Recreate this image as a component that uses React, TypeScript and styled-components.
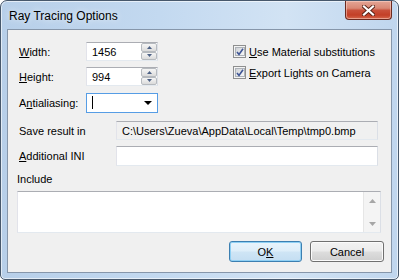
import React from "react";
import styled, { createGlobalStyle } from "styled-components";

const Global = createGlobalStyle`
  html, body { margin: 0; padding: 0; background: #ffffff; }
  body { width: 399px; height: 280px; overflow: hidden; }
  #root { width: 399px; height: 280px; }
`;

const Window = styled.div`
  box-sizing: border-box;
  width: 399px;
  height: 280px;
  border: 1px solid #47586c;
  border-radius: 7px 7px 5px 5px;
  background: linear-gradient(90deg, #b7cfe9 0%, #c3d9f0 40%, #d2e3f4 72%, #c0d6ee 100%);
  box-shadow: inset 0 0 0 1px rgba(255, 255, 255, 0.6);
  display: flex;
  flex-direction: column;
  font-family: "Liberation Sans", Arial, sans-serif;
  font-size: 11px;
  color: #000;
  overflow: hidden;
`;

const TitleBar = styled.div`
  height: 28px;
  display: flex;
  align-items: flex-start;
  padding: 0 6px 0 8px;
  flex: none;
`;

const Title = styled.div`
  font-family: "Liberation Sans", Arial, sans-serif;
  font-size: 12px;
  line-height: 16px;
  margin-top: 7px;
  color: #000;
  text-shadow: 0 0 6px rgba(255, 255, 255, 0.9);
`;

const CloseButton = styled.div`
  margin-left: auto;
  width: 47px;
  height: 19px;
  box-sizing: border-box;
  border: 1px solid #6b2a20;
  border-top: none;
  border-radius: 0 0 4px 4px;
  background: linear-gradient(180deg, #e4a595 0%, #d98875 40%, #c9503a 52%, #c33f27 78%, #d5674c 100%);
  box-shadow: inset 0 0 0 1px rgba(255, 220, 210, 0.5);
  display: flex;
  align-items: center;
  justify-content: center;
`;

const Client = styled.div`
  flex: 1;
  margin: 0 6px 6px 6px;
  box-sizing: border-box;
  border: 1px solid #8696aa;
  background: #f0f0f0;
  padding: 12px 7px 9px 9px;
  display: flex;
  flex-direction: column;
`;

const TopSection = styled.div`
  display: flex;
  align-items: flex-start;
`;

const LeftGrid = styled.div`
  display: grid;
  grid-template-columns: 69px 72px;
  grid-template-rows: 19px 19px 20px;
  row-gap: 6px;
  align-items: center;
  & > :nth-child(5), & > :nth-child(6) { margin-top: 1px; }
`;

const Label = styled.div<{ $indent?: number }>`
  padding-left: ${(p) => p.$indent ?? 2}px;
  line-height: 14px;
  white-space: nowrap;
`;

const Edit = styled.div<{ $readonly?: boolean; $focused?: boolean; $h?: number }>`
  box-sizing: border-box;
  height: ${(p) => p.$h ?? (p.$focused ? 20 : 19)}px;
  border: 1px solid;
  border-color: ${(p) =>
    p.$focused ? "#569de5" : "#abadb3 #dbdfe6 #e3e9ef #e2e3ea"};
  background: ${(p) => (p.$readonly ? "#f0f0f0" : "#ffffff")};
  display: flex;
  align-items: center;
  padding-left: 5px;
  white-space: nowrap;
  overflow: hidden;
`;

const EditText = styled.span`
  line-height: 14px;
`;

const SpinColumn = styled.div`
  margin-left: auto;
  width: 16px;
  align-self: stretch;
  display: flex;
  flex-direction: column;
`;

const SpinButton = styled.div`
  flex: 1;
  box-sizing: border-box;
  border: 1px solid #b6babf;
  border-radius: 2px;
  background: linear-gradient(180deg, #f5f5f5 0%, #e9e9e9 50%, #dadada 100%);
  display: flex;
  align-items: center;
  justify-content: center;
`;

const Caret = styled.span`
  width: 1px;
  height: 13px;
  background: #000;
`;

const DropArrow = styled.div`
  margin-left: auto;
  margin-right: 5px;
  width: 0;
  height: 0;
  border-left: 4px solid transparent;
  border-right: 4px solid transparent;
  border-top: 4px solid #000;
`;

const Checks = styled.div`
  margin-left: 75px;
  margin-top: 1px;
  display: flex;
  flex-direction: column;
  gap: 4px;
`;

const CheckRow = styled.div`
  height: 17px;
  display: flex;
  align-items: center;
  gap: 3px;
  white-space: nowrap;
`;

const CheckBox = styled.div`
  width: 13px;
  height: 13px;
  box-sizing: border-box;
  border: 1px solid #8e8f8f;
  background: #f4f4f4;
  padding: 1px;
  display: flex;
`;

const CheckInner = styled.div`
  flex: 1;
  border: 1px solid #aeb3b9;
  background: linear-gradient(135deg, #cfd2d6 0%, #e8eaec 60%, #f6f6f6 100%);
  display: flex;
  align-items: center;
  justify-content: center;
`;

const FieldRow = styled.div<{ $top: number }>`
  display: grid;
  grid-template-columns: 99px 262px;
  align-items: center;
  margin-top: ${(p) => p.$top}px;
`;

const IncludeLabel = styled.div`
  margin-top: 6px;
  line-height: 14px;
`;

const TextArea = styled.div`
  margin-top: 5px;
  margin-right: 3px;
  height: 42px;
  box-sizing: border-box;
  border: 1px solid;
  border-color: #abadb3 #dbdfe6 #e3e9ef #e2e3ea;
  background: #ffffff;
  display: flex;
  justify-content: flex-end;
`;

const ScrollBar = styled.div`
  width: 17px;
  box-sizing: border-box;
  border-left: 1px solid #e6e6e6;
  background: #f4f4f4;
  display: flex;
  flex-direction: column;
  justify-content: space-between;
  align-items: center;
  padding: 7px 0 6px;
`;

const ButtonRow = styled.div`
  margin-top: 8px;
  display: flex;
  justify-content: flex-end;
  gap: 8px;
`;

const Button = styled.div<{ $default?: boolean; $w: number }>`
  width: ${(p) => p.$w}px;
  height: 21px;
  box-sizing: border-box;
  border: 1px solid ${(p) => (p.$default ? "#3c7fb1" : "#707070")};
  border-radius: 3px;
  background: ${(p) =>
    p.$default
      ? "linear-gradient(180deg, #e9f4fc 0%, #deeef9 48%, #cfe5f5 52%, #c4def2 100%)"
      : "linear-gradient(180deg, #f2f2f2 0%, #ebebeb 48%, #dddddd 52%, #cfcfcf 100%)"};
  box-shadow: ${(p) =>
    p.$default ? "inset 0 0 0 1px #8fd0f4" : "inset 0 0 0 1px #fbfbfb"};
  display: flex;
  align-items: center;
  justify-content: center;
  line-height: 14px;
`;

const Key = styled.u`
  text-decoration-thickness: 1px;
  text-underline-offset: 1px;
`;

const UpTri = ({ color }: { color: string }) => (
  <svg width="7" height="4" viewBox="0 0 7 4">
    <path d="M0 4 L3.5 0 L7 4 Z" fill={color} />
  </svg>
);
const DownTri = ({ color }: { color: string }) => (
  <svg width="7" height="4" viewBox="0 0 7 4">
    <path d="M0 0 L3.5 4 L7 0 Z" fill={color} />
  </svg>
);

const Spin = () => (
  <SpinColumn>
    <SpinButton>
      <svg width="5" height="3" viewBox="0 0 5 3">
        <path d="M0 3 L2.5 0 L5 3 Z" fill="#4d6185" />
      </svg>
    </SpinButton>
    <SpinButton>
      <svg width="5" height="3" viewBox="0 0 5 3">
        <path d="M0 0 L2.5 3 L5 0 Z" fill="#4d6185" />
      </svg>
    </SpinButton>
  </SpinColumn>
);

const Check = () => (
  <CheckBox>
    <CheckInner>
      <svg width="8" height="8" viewBox="0 0 8 8">
        <path d="M1 4 L3 6.5 L7 0.8" stroke="#3f5595" strokeWidth="1.6" fill="none" />
      </svg>
    </CheckInner>
  </CheckBox>
);

export default function App() {
  return (
    <>
      <Global />
      <Window>
        <TitleBar>
          <Title>Ray Tracing Options</Title>
          <CloseButton>
            <svg width="13" height="11" viewBox="0 0 13 11">
              <path d="M2 1.5 L11 9.5 M11 1.5 L2 9.5" stroke="#5a2418" strokeWidth="4" strokeLinecap="square" />
              <path d="M2 1.5 L11 9.5 M11 1.5 L2 9.5" stroke="#ffffff" strokeWidth="2.2" strokeLinecap="square" />
            </svg>
          </CloseButton>
        </TitleBar>
        <Client>
          <TopSection>
            <LeftGrid>
              <Label><Key>W</Key>idth:</Label>
              <Edit>
                <EditText>1456</EditText>
                <Spin />
              </Edit>
              <Label><Key>H</Key>eight:</Label>
              <Edit>
                <EditText>994</EditText>
                <Spin />
              </Edit>
              <Label>A<Key>n</Key>tialiasing:</Label>
              <Edit $focused>
                <Caret />
                <DropArrow />
              </Edit>
            </LeftGrid>
            <Checks>
              <CheckRow>
                <Check />
                <span><Key>U</Key>se Material substitutions</span>
              </CheckRow>
              <CheckRow>
                <Check />
                <span><Key>E</Key>xport Lights on Camera</span>
              </CheckRow>
            </Checks>
          </TopSection>
          <FieldRow $top={9}>
            <Label>Save result in</Label>
            <Edit $readonly>
              <EditText>C:\Users\Zueva\AppData\Local\Temp\tmp0.bmp</EditText>
            </Edit>
          </FieldRow>
          <FieldRow $top={6}>
            <Label><Key>A</Key>dditional INI</Label>
            <Edit $h={20} />
          </FieldRow>
          <IncludeLabel>Include</IncludeLabel>
          <TextArea>
            <ScrollBar>
              <UpTri color="#a6a6a6" />
              <DownTri color="#a6a6a6" />
            </ScrollBar>
          </TextArea>
          <ButtonRow>
            <Button $default $w={73}>O<Key>K</Key></Button>
            <Button $w={74}>Cancel</Button>
          </ButtonRow>
        </Client>
      </Window>
    </>
  );
}
